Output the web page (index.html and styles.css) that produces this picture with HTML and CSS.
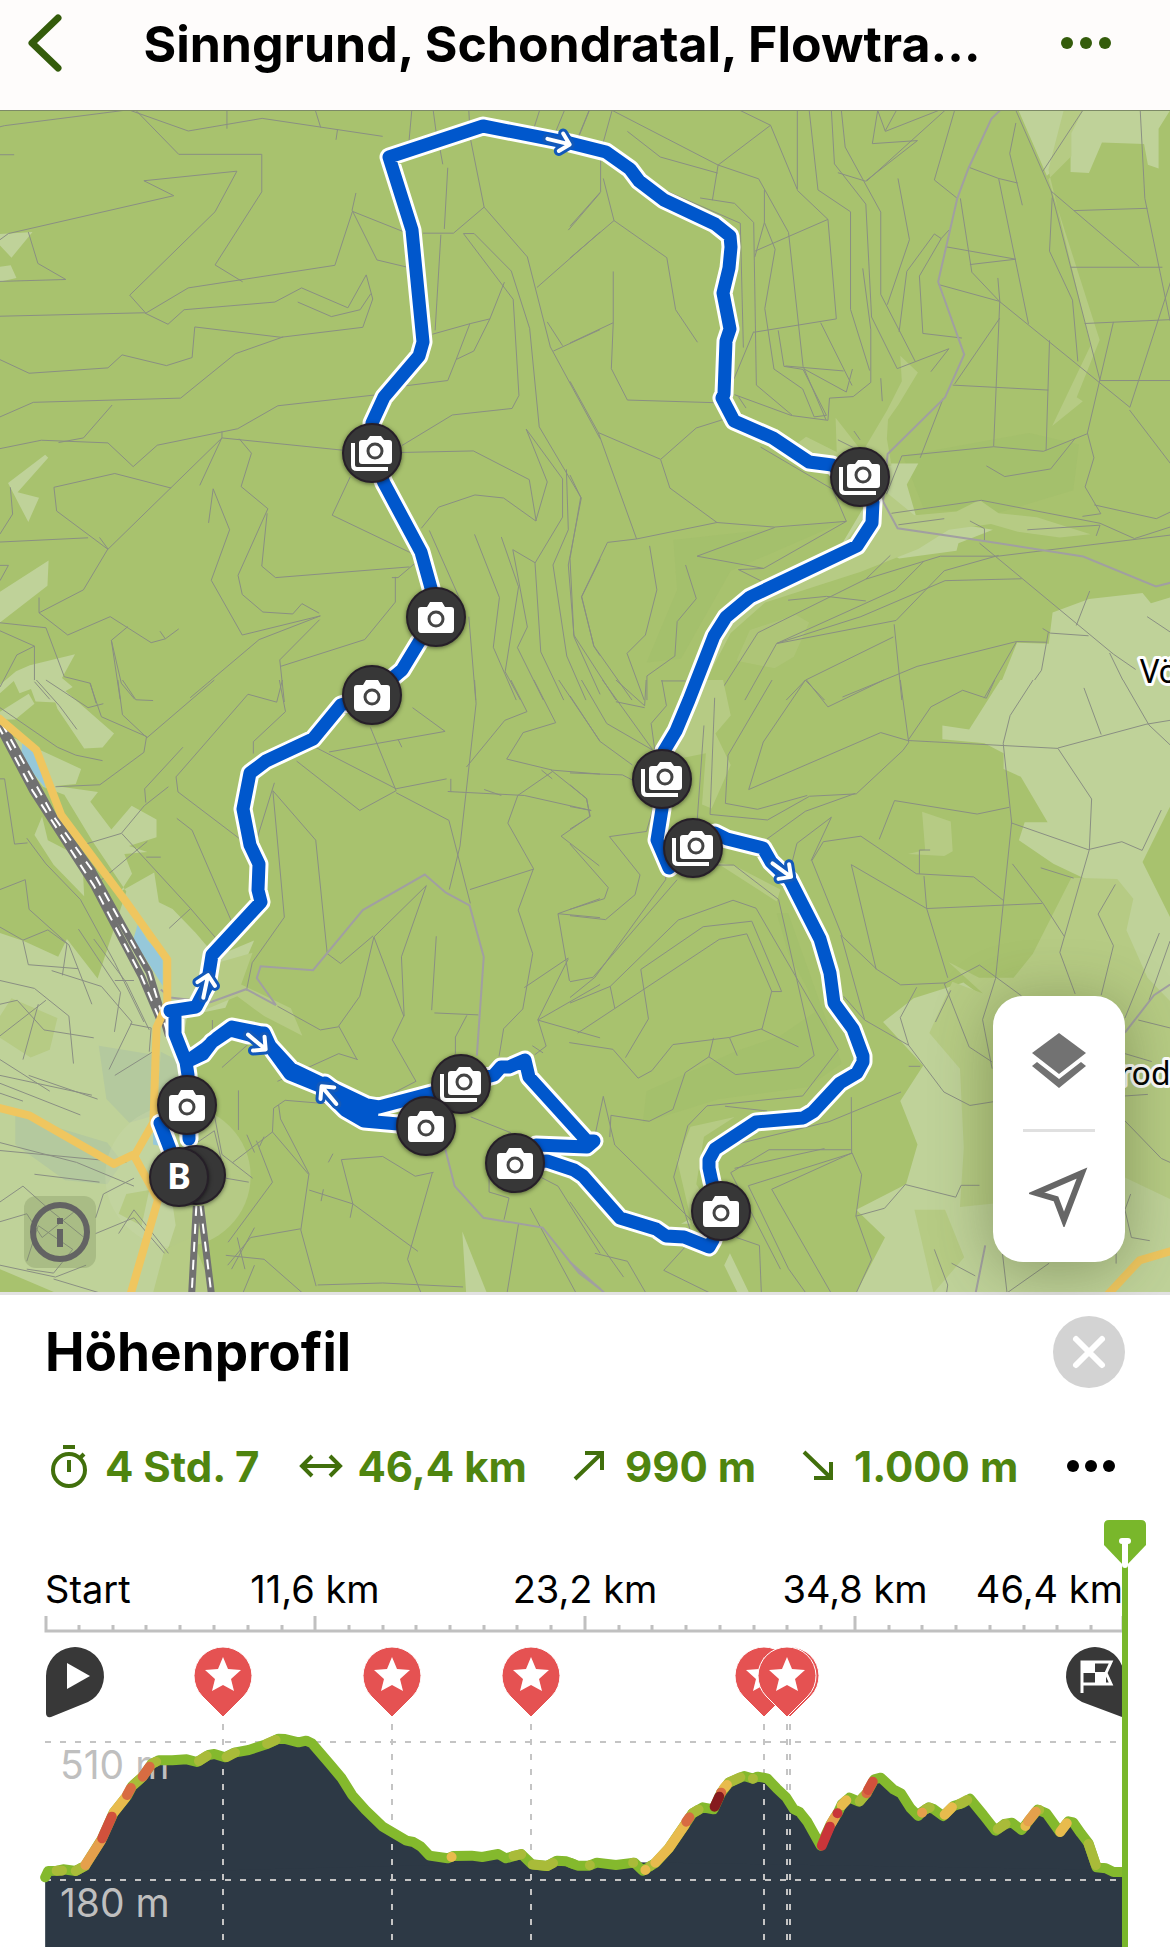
FILE: index.html
```html
<!DOCTYPE html>
<html lang="de">
<head>
    <meta charset="UTF-8">
    <meta name="viewport" content="width=device-width, initial-scale=1.0">
    <title>Sinngrund, Schondratal, Flowtrail</title>
    <link rel="stylesheet" href="styles.css">
</head>
<body>
    <header class="topbar">
        <button class="icon-btn" type="button" aria-label="Zurück">
            <svg width="40" height="64" viewBox="0 0 40 64"><path class="chevron" d="M34 6 8 31l26 25"/></svg>
        </button>
        <h1>Sinngrund, Schondratal, Flowtra…</h1>
        <button class="icon-btn more" type="button" aria-label="Mehr">
            <svg width="52" height="20" viewBox="0 0 52 20"><circle cx="7" cy="9" r="6"/><circle cx="26" cy="9" r="6"/><circle cx="45" cy="9" r="6"/></svg>
        </button>
    </header>

    <main>
        <section class="map" aria-label="Karte">
            <svg class="map-canvas" viewBox="0 111 1170 1181">
                <defs>
                    <g id="camera">
                        <circle class="spot" r="29"/>
                        <path class="glyph" d="M-15-10h6l3-5H6l3 5h6q3 0 3 3v19q0 4-3 4h-30q-3 0-3-4V-7q0-3 3-3z"/>
                        <circle class="lens" cy="2" r="7"/>
                    </g>
                    <g id="gallery">
                        <circle class="spot" r="29"/>
                        <path class="glyph" d="M-10-13h5l3-4h11l3 4h5q3 0 3 3V8q0 3-3 3h-27q-3 0-3-3v-18q0-3 3-3z"/>
                        <circle class="lens" cx="3" cy="-2" r="7"/>
                        <path class="stack" d="M-19-10V12q0 4 4 4h31"/>
                    </g>
                    <g id="arrow">
                        <path class="arrow-edge" d="M-13 0H9M1-9l9 9-9 9"/>
                        <path class="arrow-line" d="M-13 0H9M1-9l9 9-9 9"/>
                    </g>
                    <path id="tour" d="M170 1149 160 1123M189 1139 188 1075 186 1062 175 1034V1011H170L196 1007 207 986 212 955 261 902 258 890 259 864 250 845 243 809 250 773 266 761 313 739 341 705 372 695 402 670 419 642 436 617 431 588 421 552 384 483 372 453V423L384 397 419 356 423 342 412 230 389 157 483 126 570 143 606 152 630 169 639 181 664 200 715 224 730 236 731 247 729 268 723 293 730 329 726 341 724 394 722 398 734 421 773 438 809 462 832 465 873 502 872 523 857 546 750 597 726 617 714 636 689 700 676 731 664 751 662 809 657 840 669 868 693 848 715 833 727 839 763 848 771 862 790 880 820 939 830 973 834 1003 853 1029 863 1056V1062L857 1073 840 1083 813 1112 803 1118 756 1122 715 1149 709 1160V1168L712 1182 721 1211 713 1240 709 1247 684 1237 666 1236 656 1229 620 1218 583 1176 574 1170 547 1161 515 1163 536 1145 587 1147 594 1141H587L529 1077 525 1060 509 1067H501L494 1075 461 1084 432 1093 379 1107 367 1105 325 1085 291 1069 270 1046 264 1033 249 1035 230 1030 212 1042 203 1054 186 1062M186 1062 206 1048 217 1038 232 1027 262 1033 274 1052 290 1074 322 1087 345 1110 364 1121 398 1124 426 1126M325 1083 350 1102 372 1113"/>
                </defs>

                <rect class="forest" y="100" width="1170" height="1200"/>

                <!-- open land, north-west tile -->
                <g transform="translate(0 100) scale(.3827)">
                    <path class="open" d="M0 350l85-5-55 67-30-32zM0 436l28-4 15 33-43 10zM118 927l8 8-80 90 56 14-28 64-53-102zM0 1285l127-82-3 66L0 1365zM78 1477l118-29-34 62 28 24-25 14 23 28-95-4-12-33-30 11-15-32-36 32-30 3 72-60z"/>
                    <path class="paths" d="M0 70l12-3L325 27M340 27l152 54 193-33 315 47M355 27l112 115h217v98L562 431l72 44M593 27v48M824 27l14 45M882 77l-4 27M0 365l22-16 432-99-78-39 243-25-57 106-223 218 42 47 111-66 383-59 46-141 133 53M930 243l-10 45 65 130 80 19M0 565l377-9 62 30 42-38 237-20 70-37 121 52 48-86 17 63-26 74-214 26-225-27-7 80-67 21-116-28-37 34-206 14-77-36M778 528l88 38 75-18 28-42M740 619l-125 44-143 116-385 11-87 38M0 911l108-22 174 7 66 62 63-56 210-43 105-60 252-28M293 797l-75 86-65 12M580 866v16l-58 125M580 883L282 1174l-134-100-7-62 159-36 147 38M580 883l315 32M625 885l32 38-27 87 70 58-78 174 11 50 54 46 78 5 24-27 45 25M698 1080l-14 138 36 30 350-28M545 1105l12-89 43 107-48 132 81 143 204-50-160 62-180 152M0 1155l230-11M260 1143l22 30-64 107-116 60v-40M0 1366l120 13 48 128 68 17 15 52M102 1340l75 58 111-48 107 68 37-10 35-26M418 1388l14 20M334 1376l-43 36 23 154M291 1412l26 112 35 42M835 1358l-104 105 12 110M733 1480l220-70 80-98v-66M1085 1210l-45 38h-16M0 1387l90 40v93l40 46M90 1427l-46 23-44 84M27 1012l6 70-33 52M0 1216h22l-22 40M74 345l25 82 73 42-172 5M0 143h37M1105 348h80l80-68 113 130 60 235 130 240M1265 280l-36-180-4-73M1211 349h28l97 98 48 150 25 257 110 186-34 175 15 188 68 150M1211 349l130 172 15 251-18 34-156 17-132 80M1375 860l95 130v100l-72 120 15 232 60 126M1375 860l55 138-30 102-84-60-75-8-95 32-45 55M1152 352l-15 250M1170 177l-9 160M1130 612l100-28 50-12 38-96M1280 572l-42 84-46 22 36-94M1192 678l-22 55-112 14M1050 921l187-4 146 75 18 108M915 985l-47 100 207 99M1122 1125l80 180M1225 1350l18 218M1240 1135l65 165-16 130 60 138M1310 1142l45 130-35 222 40 74M1340 1175l58 34M1340 1175l38 202-26 54 68 137M1480 965l5 158-40 92 36 238 50 115M1568 243l-83 97M1568 345l-165 145M1568 600l-122 56M1430 580l40 62M1410 27l-16 50M1475 27l-37 90M1540 27l-40 100M1076 27l-9 100M1132 27l12 90M1568 1200l-48 98 32 130 16 24M1150 130l7 38"/>
                </g>

                <!-- north-east tile: valley of the Schondra -->
                <g transform="translate(570 100) scale(.3827)">
                    <path class="wood" d="M870 930l330-60 130 30-15 120-200 60-190-10zM270 1150l450-50-300 130-130 230-90 10 80-190z"/>
                    <path class="open" d="M1172 27h396l-30 48v104l-28-10-10-54-110-4-34 80-48-3v-45l-62 55zM835 950h75l-30 55 25 85 200 33-90 35-5 20-150 20-70-40-90 20zM1568 1300l-50 15-22-27-140 16-95 35-10 82-83-3-60 150h460z"/>
                    <path class="meadow" d="M1290 27h50l-30 60v60l-60 60 134 420-60 150 16 10-80 65 100-210-110-460zM863 668l46 44-50 83-28 40-3 50 12 70-70 20-165-50-8-30 20-15 80 40-3-90 70 90 65-110 38-75zM820 1020l80 65 110-10 60-30 50 35 100 10 140 45-80 8-110-15-70-20-110 15-80 50-150 60-250 80-90 80-50 95-40 90-20-10 60-150 80-100 260-150z"/>
                    <path class="meadow soft" d="M470 1385l120-40 35 20-40 90-50 30-100-20z"/>
                    <path class="paths" d="M50 27L22 95M110 27L87 110M80 155v85L0 330M110 27l277 143 137-104-80-39M150 82l86 67 150 42M387 170l-15 92M387 170l106 36 78 140 38 350 60 140M524 66l70 168V27M594 236l80 76 22 260-216 35M340 256l90 14 50 50 7 425 95 80 92 12 4-58 62-4 46-37V600L765 440M250 237l195 85 8 325M508 235v85l-25 90M508 320l28 70-27 155 24 158 75 52 30 73 32-4-61-120-50-8-15-94M483 395l191-83M625 27l23 208 85 57v255l50 160M683 27l8 140 82 105 15 295 67 135 135-52-47 60M709 27l10 96 93 170v215l90 175M700 190l72 22 136-106-118 8 14-87 20 55 140-55M824 80l29-53M980 27L775 212M857 205l30 160-58 170M1005 27l-53 182 60 48M990 340l-20 22-18-12-72 98-20 158M970 362l-57 98 9 150 102 12M1165 60l-16 80 33 135M1040 175l80 30 50 12M1120 205l78 380M1165 27l92 211 230 196M1340 27l-105 160M1257 238l128 495M1490 27l12 230 66 320M1260 255l-7 140 60 128 14 160M1317 289l192-6M1308 437h240M1345 584l223-10M1020 257l30 193 73 77 340 276 107-330M985 384l180 32-120 14M962 482l160 44M1118 465l5 60-16 380M1123 570l-118 172M1000 745l250 13M1253 628l-9 287M1420 580l-68 290 17 65-23 76 41 70-48 7M1385 733h183M1462 810l107 140M867 930l240-24 130 12 115-46M1320 884l-64 80-120 20-48-28M867 930l-40 100M840 1080l235-34 310 60 90 40 93-30M1370 1058l162 36 36-17M1568 1137l-450 55-150 0-195 60-282 140-112 176M858 1110l120-16M1045 1100l38 20v35M1195 1123l190-12-10 28M1070 1158l350 290 58 40M1120 1190l-142 40-126 130-310 60M1180 1251l-200 5-220 94-220 70-83 148M837 1190l-64 62M570 1307l100-10 103 12M925 1205l-75 75-310 140M1358 1283l-35 90M1235 1381l20 12 100 7M1250 1390l-18 100-55 78M1247 1417l-80-2-85 148M1167 1415l-260 65-195 80M845 1403l-230 113 50 52M847 1370l20 198M1568 1390l-60-40M1410 1445l60 123M1343 1540l12 28M0 413l115-98-28-110M115 315l138 97 23 136 57 85M113 448v134L0 635M113 582l-5 120 42 82 230 7M0 735l74 134 100 278M74 869l163 70 93-82 70-22M237 940l24 74 123 90M174 1147l210-43 150 12 188-15-36-84-188-110M535 1117l-203 75 174 32 216-123M440 1227l66-3M440 1227l60 30M0 980l28 58-28 160 10 200 110 170M208 1165l19 115-30 118-48 48 45 122M174 1147l-76 9-68 142 32 128 100 142M302 1215l28 88-50 60-6 90-73 52v63M238 1518h64M615 1516l-50 52M915 935l60-155M430 770l150 55M428 730l52-125M715 708l-152-13M612 703l110 60 16-60M655 582l82 164M742 865l16 23M812 727l4 60M460 805l-20-30M700 888l40 20"/>
                    <path class="lane" d="M1124 27l-23 22-60 130-29 78-50 218 68 190-50 112-150 148-12 124 38 70 230 34 255 40 190 78 40-10"/>
                </g>

                <!-- south-west tile: town and railway -->
                <g transform="translate(0 680) scale(.3827 .3954)">
                    <path class="open" d="M90 0l60 10 148 125-30 36-48 2-70-100-20-60-45-10zM0 80l75-45 15 25-50 40h-40zM0 130l212 95-14 38-52 5 110 15-20 25 55 70 53-60 65 35v45l-72 22 48 15-60 5 20 50-30 45 88-48 12 75 36 17 60 60 53 60 100-40-75 170-100 20-60 330 30 200-90 270H280l-30-55-70-30L0 1490V640l62 20 90 40 23-45 80 100 75-220-90-130-72-115-56-20zM110 345l15 60 90 45 5 97-80-80-50-75z"/>
                    <path class="town" d="M258 925l160 25-10 150-70 20-60-60zM40 1100l240 70 40 50-40 55-110-10-130-90zM420 940l60 30-20 60-50 60z"/>
                    <ellipse class="glow" cx="465" cy="1255" rx="190" ry="180"/>
                    <path class="meadow" d="M0 850l30-45 120 50-20 80-50 20-80-50zM550 720l110-30-30 80 130 60 30 70-100-50-70-50-100 40zM330 1300l60-10-20 90-60-30zM430 1440l70-30 60 140H400z"/>
                    <path class="open" d="M1208 1395l64 155h-54z"/>
                    <path class="water" d="M58 160l36 25 26 90-32-38-33-45zM360 618l25 40 40 40v75l-52-80-27-30zM400 1145l25 5v30l-25-5z"/>
                    <path class="paths" d="M0 70l150 100 48 20 70 14M95 0l60 65 46 60M120 0l110 70 40-10M235 8l30 85 118 50-7 40-115 82-116 5M308 0l12 88 64 58L560 0M320 0l35 50 45 2M730 0l16 80-84 76v30M648 36l75 20 15-56M648 36L460 245l5 38 170 125M478 170l-100 105 3 35M440 270l-63 48-60 70-90 26M318 388l180 190-56 50M498 578l75 85M385 408L262 508M420 448h-38M462 350l40 30 105 235M70 400l50 65 90 90 90 160 76 150M0 250l12 0 26 165 34-3M0 530l66-25 10 75 104 90 60 150M0 625l60 33 65-26 50 35-12 80M60 660l14 60 130 10M0 760l90 20 90 70 12 120M0 820l45-10 70 75 130 20M135 735l130 40 80 90-60 120M205 630l48 70 62 90-16 100M245 655l85 110 60 120M350 760h-50M717 260l-45 140M713 280l30 320-84 115-15 70M713 280l112 125 30 287 35 25 85-70M968 120l67 160-95 50-165-125M860 182l303-52-85-60M820 168l215 107 132-25M1040 150l10 20M1035 285l138 70 56 210M1240 0l4 60-42 360-28 110M1335 0l42 80-58 22-100 118M1395 0l57 108-85 25-43 67 120 28 124 10M1460 0l108 155M1170 282l200 10 175 38M1178 250v32M1265 277l45 15M1415 228l28 22M1443 232l-90 60-26 70 67 115-40 105 38 110-26 140-50 50-12 70M1440 228l93 72 8 45-75 50 100 75M1228 530l167-52M1568 553l-110 38 30 170M1458 591l110 10M1485 705l-80 155 163 45M1370 778l115-75M1568 770l-162 90 21 66-30 22M1391 925l28 18M977 650l78 200-30 60 62 105-80 40-100 10M977 650l137-130-65 180 7 150M977 650l-37 150-55 75 48 85M725 825l112 60 48-8M885 945l50 15M885 945l-160 70M1140 648l-12 187M1135 842l115 5M1190 945v-42l30-55M623 1038v100M712 1143l-105 78M745 1063l-30 20-3 60 95 108-21 140 40 142M745 1063l125 10 150 50M728 1075l5 35 75 140M785 1388l-130 22-60 70M645 1150l20 45M690 1155l-12 25M670 1165l42 105-116 152M808 1290l114 35 170 120M922 1325l-7 35M845 1288l-6 30M870 1198l-12 22M892 1213l108-8 85 50 48-10M892 1213l30 112M1130 1245l-65 220 35 85M1230 1105l105 40M1330 1310l-52-15v-40M1330 1310l-13 55M1385 1335l120 215M1568 1450l-110-170-80-40M830 1530l170-5 210 10M590 1455l100 10 100 85M665 1480l-30 70M605 1490l60-105M640 1490l-20-80M1325 1550l30-175M0 960l130 80M0 1000l240 50M0 1020l210 80M0 1045l60 20M75 1000l180 60M0 1170l200 50 150 60M0 1190l330 30M90 1250l170 20M0 1320l60-40 70 60 90 70M0 1370l70-20 40 60 90-70M70 1470l30-90 90 60-50 60-70-10M250 1360l20-60 80-40M250 1400l100-40 80 90M140 1515l120 35M0 1480l145 30 80-30M310 1400l40-60 90 110M560 1100l20 100 80 60M500 1180l60-40 30 120 60 10M580 980l70-60M555 950v-90M340 870l55 10-5 60M300 1000l100-60M0 900l120-90M60 960l40-140"/>
                    <path class="lane" d="M420 783l25 20 105 12 93-33 78 40-50-68 10-30 137 10 130-152 162-90 55 46 62 32 37 130-18 250M1163 1185l25 95 75 80 155 25 95 115 55 40"/>
                    <path class="rail" d="M-5 115l90 165 160 240 65 120 60 110 48 110M5 110l135 235 100 135 80 140 70 120 50 160M513 1330l-12 220M524 1330l28 220"/>
                    <path class="rail-dash" d="M-5 115l90 165 160 240 65 120 60 110 48 110M5 110l135 235 100 135 80 140 70 120 50 160M513 1330l-12 220M524 1330l28 220"/>
                    <path class="road" d="M-5 95l100 82 65 165 170 220 107 145v112l-28 60-8 240-50 85 62 110-75 250M350 1200l-52 24-220-122-82-20"/>
                </g>

                <!-- south-east tile -->
                <g transform="translate(570 680) scale(.3827 .3954)">
                    <path class="wood" d="M540 590l30 0 140 380-90 60-230 30-200 60 10-80 230-100 120-40 90-60-20-60-50-90z"/>
                    <path class="open" d="M1125 0h443v320l-72 140 72 140v950h-820l75-140-75-70 130-65 30-100-45-110 60-90-105-110 80-60 130-40 100 70 185-180 10-80 50-60-110-50-90-60 15-45 60 0-70-115-45-20v-40l-50-25-110-10v-35l70 10zM290 1375l20-10 5 10zM418 1450l50 100h-30l-35-70z"/>
                    <path class="meadow" d="M340 0h60l20 90-40 45 40 80-50 110-25-10 10-130-75 15-40 20zM920 333l75 25 5 75-22 12-95-5 45-10zM380 460l50 10 120 60-10 30zM1310 500l120 3 42 50-18 80 55 120 60 60v500l-130-60-120 50-300 30 10-150-10-200-80-90 60-130 80 30-90-80 80 40 90 0 50-60zM430 1105l-80 50-20 120 40 60-50 45-40-165 35-85zM900 1340h80l50 120-80 90z"/>
                    <path class="paths" d="M0 40l78 115 85 60M30 0l66 110 125 70M85 0l130 175M120 0l75 65 4-65M120 55l75 15M240 0l12 65-40 45 10 70M0 235l137 5 30 15M0 265l43 35 10 45-53 32M0 320l55 10M0 415l100 110-10 28-90 27M217 325l-17 58-97 13 80 97-13 50-77 63-93-10M250 480v25L65 752 0 803M280 505L60 752 0 763M0 817l105-42 178-168 143-50 60 20 215 358-93 117-250 25-50 50-37 130 45 140M105 775l12 55M20 893l370-237 72-14 65 145-25 95-85 22-148 18-55 66-36 19-66-73-114-17M527 788h26l-78-178-127 14-163 108 20 125-60 98M500 883l97 45M375 905l-12 48 70 45 165-18 40-30L545 555l-117-87h-75M363 953l-62 40-32 93-62 30-100-15-3 55M417 905l20 45M87 1053l-22 100M87 1053l30 123 200 190M405 1078l110 12M735 1055l1 142-270 82 105 210 45 61M735 1188H520l-100 58 130 244M665 1185l-235 50M865 1042l-188 75-255 60M527 1288l210-92 25 55-15 105 41 110-40 84M527 1288l155 262M747 1356l75-20 54-60 132 32 14-30h48M245 1493l55-58M245 1493l120 57M65 1450l85 20 48 80M0 1320l140 190M435 1410l60 20 5 120M350 115l-18 245M378 45l-12 295 150 14 110-60 122-6 122-110 15-20L863 0M528 0L413 190l-7 122 84 15 130-35M618 0l56 68L820 0M615 0L505 157l-38 120 345-144 70 20 393 20 88 128-6 128-77 260 40 105M883 153l60-85 83-42 62 20 22-46M1210 0l-60 90-18 70 22 200-42 395-34 104 25 124M1275 172l230-60 63-10M1343 20l45 118M1445 0l68 114 55 50M808 403l40-98 216 34 84-17M1152 361l202 68 88-20 53 22 50-102M515 402l100-70 130-45M1292 649l-56-84-80-100M1230 475l86 26M735 467l197 111 302-13M735 467l65 265M932 578l-7-82M932 578l55 175M1133 558l-78-60-150-8-145-95-98 14-30 48 80 192 90 83 62 39 118-5M913 430h28M913 430v60M630 457l53-110-90 66-12 45M708 645l62 215-55-60M770 860l115 64-22-70 43-77M885 924l92 118 68 34 65-10M995 785l-40 80M978 768l92-47 110 78M978 768l65 160 60 38M885 977h30M1425 517l-45 75 40 80-32 125M1540 640l-90 215M1568 660l-55 150M1485 860l83 20M1450 945l70 20M1510 1048l-60 4M1450 1115l95 95 23 10M952 1440l35 90-3 20M997 1475l62 32M1130 1450l12 100 110-75M1465 1300l-15 40 17 70 48 8M1427 1476v-40"/>
                    <path class="lane" d="M1568 770l-42 27-76 95M1085 1430l-25 120M0 1472l90 78"/>
                    <path class="road" d="M1400 1560l88-92 90-26"/>
                </g>

                <text class="place" x="1140" y="683">Vö</text>
                <text class="place" x="1119" y="1085">roda</text>

                <use class="track-edge" href="#tour"/>
                <use class="track" href="#tour"/>

                <use href="#arrow" transform="translate(560 142) rotate(14)"/>
                <use href="#arrow" transform="translate(783 871) rotate(36)"/>
                <use href="#arrow" transform="translate(206 985) rotate(-78)"/>
                <use href="#arrow" transform="translate(258 1043) rotate(40)"/>
                <use href="#arrow" transform="translate(328 1094) rotate(230)"/>

                <use href="#gallery" x="372" y="453"/>
                <use href="#camera" x="436" y="617"/>
                <use href="#camera" x="372" y="695"/>
                <use href="#gallery" x="860" y="477"/>
                <use href="#gallery" x="662" y="779"/>
                <use href="#gallery" x="693" y="848"/>
                <use href="#gallery" x="461" y="1084"/>
                <use href="#camera" x="426" y="1126"/>
                <use href="#camera" x="515" y="1163"/>
                <use href="#camera" x="721" y="1211"/>
                <use href="#camera" x="187" y="1105"/>
                <circle class="spot" cx="196" cy="1175" r="29"/>
                <circle class="spot" cx="179" cy="1177" r="29"/>
                <text class="spot-label" x="179" y="1189">B</text>
            </svg>

            <button class="info-btn" type="button" aria-label="Kartenhinweise">
                <svg width="64" height="64" viewBox="0 0 64 64"><circle cx="32" cy="32" r="27"/><path d="M32 18v6M32 29v18"/></svg>
            </button>

            <div class="map-tools">
                <button type="button" aria-label="Kartenebenen">
                    <svg width="54" height="60" viewBox="0 0 54 60"><path class="solid" d="M27 0l27 20-27 21L0 20z"/><path class="solid" d="M27 46l22-17 5 4-27 22L0 33l5-4z"/></svg>
                </button>
                <button type="button" aria-label="Mein Standort">
                    <svg width="60" height="60" viewBox="0 0 60 60"><path class="hollow" d="M53 6 7 26l20 6 8 21z"/></svg>
                </button>
            </div>
        </section>

        <section class="profile">
            <div class="profile-head">
                <h2>Höhenprofil</h2>
                <button class="close-btn" type="button" aria-label="Schließen">
                    <svg width="36" height="36" viewBox="0 0 36 36"><path d="M5 5l26 26M31 5 5 31"/></svg>
                </button>
            </div>

            <div class="stats">
                <span class="stat"><svg viewBox="0 0 48 48"><circle cx="24" cy="28" r="16"/><path d="M18 5h12M24 18v12M35 16l4-4"/></svg>4 Std. 7</span>
                <span class="stat"><svg viewBox="0 0 48 48"><path d="M6 24h36M15 14 5 24l10 10M33 14l10 10-10 10"/></svg>46,4 km</span>
                <span class="stat"><svg viewBox="0 0 48 48"><path d="M10 37 37 11M20 11h17v17"/></svg>990 m</span>
                <span class="stat"><svg viewBox="0 0 48 48"><path d="M10 10l27 26M20 36h17V20"/></svg>1.000 m</span>
                <button class="icon-btn stats-more" type="button" aria-label="Weitere Werte">
                    <svg width="52" height="20" viewBox="0 0 52 20"><circle cx="8" cy="10" r="6"/><circle cx="26" cy="10" r="6"/><circle cx="44" cy="10" r="6"/></svg>
                </button>
            </div>

            <svg class="chart" viewBox="0 0 1170 437" role="img" aria-label="Höhenprofil der Tour">
                <defs>
                    <g id="pin">
                        <path class="pin" d="M0 1l-21-21A29 29 0 1 1 21-20z"/>
                        <path class="star" d="M0-59l5 12 13 1-10 9 3 12-11-6-11 6 3-12-10-9 13-1z"/>
                    </g>
                    <path id="west" d="M118 772 126 753 150 752 165 748 198 753 222 738 267 655 297 578 332 528 346 497 373 470 396 432 415 421 450 421 488 418 515 426 545 405 560 402 588 412 612 398 650 390 698 372 728 356 745 357 780 367 800 362 815 370 860 430 893 475 920 525 955 570 1000 620 1062 662 1080 666 1100 680 1122 707 1170 715 1185 708 1232 707 1260 711 1302 702 1322 715 1362 702 1390 733 1430 738 1455 722 1480 724 1500 733"/>
                    <path id="east" d="M0 728 20 737 50 737 70 728 120 735 168 728 190 752 224 728 258 685 304 608 320 580 347 562 375 568 395 518 415 488 455 468 478 476 490 470 515 475 540 505 565 532 585 568 600 576 620 605 655 677 680 615 700 578 710 553 730 533 755 545 775 520 795 478 812 473 845 508 865 520 890 565 910 588 920 575 937 562 950 567 975 588 1002 558 1025 550 1045 536 1080 585 1112 632 1135 612 1155 608 1180 630 1190 615 1222 569 1245 580 1280 636 1302 604 1315 607 1335 640 1355 670 1376 742 1400 745 1420 756 1443 756"/>
                </defs>

                <g class="labels">
                    <text x="45" y="93">Start</text>
                    <text x="315" y="93" text-anchor="middle">11,6 km</text>
                    <text x="585" y="93" text-anchor="middle">23,2 km</text>
                    <text x="855" y="93" text-anchor="middle">34,8 km</text>
                    <text x="1123" y="93" text-anchor="end">46,4 km</text>
                </g>
                <path class="axis" d="M46 106v15h1077v-15M315 106v15M585 106v15M855 106v15"/>
                <path class="axis" d="M79 115v6M113 115v6M146 115v6M180 115v6M214 115v6M248 115v6M282 115v6M349 115v6M383 115v6M416 115v6M450 115v6M484 115v6M517 115v6M551 115v6M619 115v6M652 115v6M686 115v6M720 115v6M754 115v6M787 115v6M821 115v6M889 115v6M922 115v6M956 115v6M990 115v6M1024 115v6M1057 115v6M1091 115v6"/>

                <path class="guide" d="M45 232h1078"/>
                <g class="ground">
                    <g transform="translate(0 110) scale(.3827 .3333)"><use href="#west"/><path d="M118 764 1500 725 1520 732V985H118z"/></g>
                    <g transform="translate(570 110) scale(.3827 .3333)"><use href="#east"/><path d="M0 724 1443 750V985H0z"/></g>
                </g>
                <text class="height" x="60" y="269">510 m</text>
                <text class="height" x="60" y="407">180 m</text>
                <path class="guide" d="M45 370h1078"/>
                <path class="guide-v" d="M223 214v223M392 214v223M531 214v223M764 214v223M787 214v223M790 214v223"/>

                <!-- slope colours, western half -->
                <g class="slope" transform="translate(0 110) scale(.3827 .3333)">
                    <use class="flat" href="#west"/>
                    <path class="mild" d="M148 752h14M198 753 222 738M350 494 368 475M396 432 408 425M520 423 540 408M592 411 614 398M698 371 720 360M1342 708 1362 703M1392 734 1430 738 1445 729"/>
                    <path class="amber" d="M297 578 328 533M1180 711v0"/>
                    <path class="orange" d="M223 735 264 662"/>
                    <path class="steep" d="M267 655 292 590"/>
                    <path class="rust" d="M332 525 342 504M373 470 391 440"/>
                </g>
                <!-- eastern half -->
                <g class="slope" transform="translate(570 110) scale(.3827 .3333)">
                    <use class="flat" href="#east"/>
                    <path class="mild" d="M52 736v0M165 728v0M210 738v0M320 580 336 569M415 488 445 472M478 476v0M757 544 767 530M930 567 940 563M1018 552 1038 540M1118 627 1138 612M1355 672 1374 735M1226 570v0"/>
                    <path class="amber" d="M197 750v0M223 728 258 685 300 615M402 505 410 495M710 556 722 541M979 584 998 562M1190 618v0M1281 636 1298 610"/>
                    <path class="orange" d="M682 612 692 592M920 578v0M1197 604 1217 575"/>
                    <path class="rust" d="M304 605 312 592M395 518v0M775 520v0"/>
                    <path class="steep" d="M779 510 791 485"/>
                    <path class="crimson" d="M658 677 679 620M699 580v0"/>
                    <path class="dark" d="M378 560 390 530"/>
                </g>

                <path class="pin-dark" d="M46 166a29 29 0 1 1 42 26l-37 15q-5 1-5-4z"/>
                <path class="star" d="M67 153l23 13-23 13z"/>
                <use href="#pin" x="223" y="206"/>
                <use href="#pin" x="392" y="206"/>
                <use href="#pin" x="531" y="206"/>
                <use href="#pin" x="764" y="206"/>
                <use href="#pin" x="790" y="206"/>
                <use href="#pin" x="787" y="206"/>
                <path class="pin-dark" d="M1124 166a29 29 0 1 0-42 26l40 15h2z"/>
                <path class="flag" d="M1082 183v-31h29l-5 11 5 11h-29"/>
                <path class="star" d="M1083 153h12v9h11v11h-11v-10h-12z"/>

                <path class="cursor" d="M1125 50v387"/>
                <path class="handle" d="M1109 10h32q5 0 5 5v20l-21 22-21-22V15q0-5 5-5z"/>
                <path class="handle-mark" d="M1122 31h6M1125 31v24"/>
            </svg>
        </section>
    </main>
</body>
</html>
```
FILE: styles.css
```css
* {
    box-sizing: border-box;
}
body {
    margin: 0;
    font-family: Inter, "Liberation Sans", sans-serif;
    background-color: #fff;
    color: #000;
}
h1, h2 {
    margin: 0;
    font-weight: 700;
    line-height: 64px;
}
h1 {
    font-size: 50px;
}
h2 {
    font-size: 53px;
}
button {
    display: flex;
    align-items: center;
    justify-content: center;
    padding: 0;
    border: none;
    background: none;
    cursor: pointer;
}
svg {
    display: block;
}

/* top bar */
.topbar {
    display: flex;
    justify-content: space-between;
    height: 111px;
    padding: 12px 58px 34px 24px;
    background-color: #fefcfb;
    border-bottom: 1px solid #7d8a66;
}
.topbar h1 {
    white-space: nowrap;
}
.chevron {
    fill: none;
    stroke: #345c0b;
    stroke-width: 7;
    stroke-linecap: round;
    stroke-linejoin: round;
}
.more {
    fill: #345c0b;
}

/* map */
.map {
    position: relative;
    border-bottom: 3px solid #e2e2e2;
}
.map-canvas {
    width: 100%;
    height: auto;
}
.map-canvas path {
    vector-effect: non-scaling-stroke;
}
.forest {
    fill: #a8c26e;
}
.wood {
    fill: #a2be6b;
    opacity: 0.6;
}
.open {
    fill: #bfd299;
}
.meadow {
    fill: #b6cb84;
}
.soft {
    opacity: 0.4;
}
.town {
    fill: #b4c99e;
}
.glow {
    fill: #c8d8a8;
    opacity: 0.4;
}
.water {
    fill: #96c8da;
}
.paths, .lane, .road, .rail, .rail-dash {
    fill: none;
}
.paths {
    stroke: #8a8f83;
    stroke-width: 1;
}
.lane {
    stroke: #a19fa1;
    stroke-width: 2;
}
.road {
    stroke: #efc65f;
    stroke-width: 8;
    stroke-linejoin: round;
}
.rail {
    stroke: #717171;
    stroke-width: 7;
}
.rail-dash {
    stroke: #fff;
    stroke-width: 2;
    stroke-dasharray: 10 8;
}
.place {
    font-family: "Noto Sans", sans-serif;
    font-size: 32px;
    stroke: #fff;
    stroke-width: 6px;
    stroke-linejoin: round;
    paint-order: stroke;
}
.track, .track-edge {
    fill: none;
    stroke: #0057cc;
    stroke-width: 13;
    stroke-linecap: round;
    stroke-linejoin: round;
}
.track-edge {
    stroke: #fff;
    stroke-width: 19;
}
.arrow-edge, .arrow-line {
    fill: none;
    stroke: #1259ba;
    stroke-width: 10;
    stroke-linecap: round;
    stroke-linejoin: round;
}
.arrow-line {
    stroke: #fff;
    stroke-width: 4;
}
.spot {
    fill: #373737;
    stroke: #261f28;
    stroke-width: 2;
    filter: drop-shadow(0 1px 2px rgba(0, 0, 0, 0.5));
}
.glyph {
    fill: #fff;
}
.lens {
    fill: #fff;
    stroke: #444;
    stroke-width: 3;
}
.stack {
    fill: none;
    stroke: #fff;
    stroke-width: 4;
}
.spot-label {
    fill: #fff;
    font-family: "Noto Sans", sans-serif;
    font-size: 36px;
    font-weight: 700;
    text-anchor: middle;
}
.info-btn {
    position: absolute;
    left: 24px;
    bottom: 24px;
    width: 72px;
    height: 72px;
    border-radius: 12px;
    background-color: rgba(120, 140, 90, 0.3);
}
.info-btn svg {
    fill: none;
    stroke: #636363;
    stroke-width: 6;
}
.map-tools {
    position: absolute;
    right: 45px;
    bottom: 30px;
    width: 132px;
    padding: 0 30px;
    border-radius: 30px;
    background-color: #fff;
    box-shadow: 0 8px 60px rgba(60, 70, 30, 0.4);
}
.map-tools button {
    width: 100%;
    height: 133px;
}
.map-tools button + button {
    border-top: 3px solid #e0e0e0;
}
.solid {
    fill: #727272;
}
.hollow {
    fill: none;
    stroke: #666;
    stroke-width: 6;
}

/* elevation profile */
.profile {
    position: relative;
    background-color: #fff;
}
.profile-head {
    display: flex;
    align-items: center;
    justify-content: space-between;
    padding: 21px 45px 0;
}
.close-btn {
    width: 72px;
    height: 72px;
    border-radius: 50%;
    background-color: #d3d3d3;
}
.close-btn svg {
    fill: none;
    stroke: #fff;
    stroke-width: 6;
    stroke-linecap: round;
}
.stats {
    display: flex;
    align-items: center;
    gap: 38px;
    height: 60px;
    margin-top: 48px;
    padding: 0 45px;
    font-size: 42px;
    font-weight: 700;
    color: #4f850f;
}
.stat {
    display: flex;
    align-items: center;
    gap: 12px;
    white-space: nowrap;
}
.stat svg {
    width: 48px;
    height: 48px;
    fill: none;
    stroke: #416f0c;
    stroke-width: 4;
}
.stats-more {
    width: 72px;
    margin-left: auto;
}
.chart {
    width: 100%;
    height: auto;
    margin-top: 14px;
}
.labels {
    font-size: 38px;
}
.height {
    font-size: 39px;
    fill: #bfbfbf;
}
.axis {
    fill: none;
    stroke: #c0c0c0;
    stroke-width: 3;
}
.guide, .guide-v {
    fill: none;
    stroke: #c4c4c4;
    stroke-width: 2;
    stroke-dasharray: 6 9;
}
.ground {
    fill: #2d3945;
}
.slope {
    fill: none;
    stroke-width: 10;
    stroke-linecap: round;
    stroke-linejoin: round;
}
.slope path, #west, #east {
    vector-effect: non-scaling-stroke;
}
.flat {
    stroke: #84b92d;
}
.mild {
    stroke: #a9bb39;
}
.amber {
    stroke: #e8bb4d;
}
.orange {
    stroke: #e5a04c;
}
.rust {
    stroke: #d86c42;
}
.steep {
    stroke: #d1513c;
}
.crimson {
    stroke: #c93539;
}
.dark {
    stroke: #861a1e;
}
.pin {
    fill: #e55252;
    stroke: #fff;
    stroke-width: 1;
}
.pin-dark {
    fill: #383838;
}
.star {
    fill: #fff;
}
.flag {
    fill: none;
    stroke: #fff;
    stroke-width: 3;
}
.cursor {
    stroke: #79b72b;
    stroke-width: 6;
}
.handle {
    fill: #79b72b;
}
.handle-mark {
    stroke: #fff;
    stroke-width: 6;
    stroke-linecap: round;
}
```
